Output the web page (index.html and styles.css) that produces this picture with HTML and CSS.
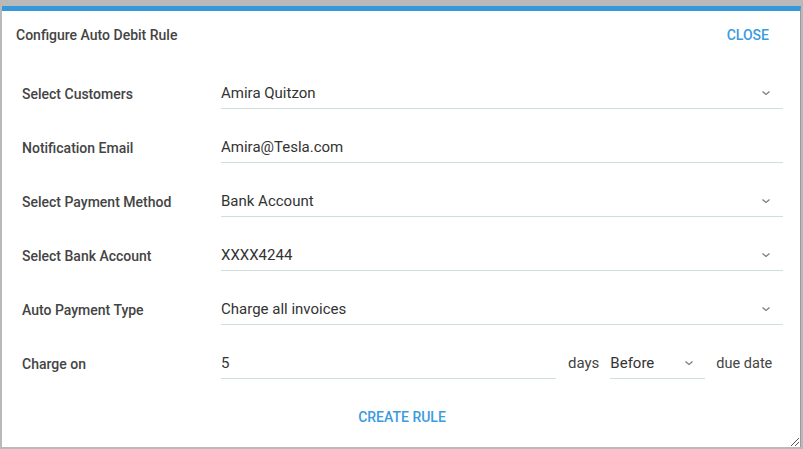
FILE: index.html
```html
<!DOCTYPE html>
<html>
<head>
<meta charset="utf-8">
<link rel="stylesheet" href="styles.css">
</head>
<body>
<div class="dialog">
  <div class="header">
    <div class="title">Configure Auto Debit Rule</div>
    <div class="close">CLOSE</div>
  </div>
  <div class="form">
    <div class="row">
      <div class="label">Select Customers</div>
      <div class="field select"><span>Amira Quitzon</span><svg class="chev" width="10" height="6" viewBox="0 0 10 6"><path d="M1.5 1.5 L5 4.5 L8.5 1.5" fill="none" stroke="#7a7a7a" stroke-width="1.2"/></svg></div>
    </div>
    <div class="row">
      <div class="label">Notification Email</div>
      <div class="field"><span>Amira@Tesla.com</span></div>
    </div>
    <div class="row">
      <div class="label">Select Payment Method</div>
      <div class="field select"><span>Bank Account</span><svg class="chev" width="10" height="6" viewBox="0 0 10 6"><path d="M1.5 1.5 L5 4.5 L8.5 1.5" fill="none" stroke="#7a7a7a" stroke-width="1.2"/></svg></div>
    </div>
    <div class="row">
      <div class="label">Select Bank Account</div>
      <div class="field select"><span>XXXX4244</span><svg class="chev" width="10" height="6" viewBox="0 0 10 6"><path d="M1.5 1.5 L5 4.5 L8.5 1.5" fill="none" stroke="#7a7a7a" stroke-width="1.2"/></svg></div>
    </div>
    <div class="row">
      <div class="label">Auto Payment Type</div>
      <div class="field select"><span>Charge all invoices</span><svg class="chev" width="10" height="6" viewBox="0 0 10 6"><path d="M1.5 1.5 L5 4.5 L8.5 1.5" fill="none" stroke="#7a7a7a" stroke-width="1.2"/></svg></div>
    </div>
    <div class="row">
      <div class="label">Charge on</div>
      <div class="charge">
        <div class="field days-input"><span>5</span></div>
        <div class="text days">days</div>
        <div class="field select when"><span>Before</span><svg class="chev" width="10" height="6" viewBox="0 0 10 6"><path d="M1.5 1.5 L5 4.5 L8.5 1.5" fill="none" stroke="#7a7a7a" stroke-width="1.2"/></svg></div>
        <div class="text due">due date</div>
      </div>
    </div>
  </div>
  <div class="footer">
    <div class="create">CREATE RULE</div>
  </div>
  <svg class="resize" width="10" height="10" viewBox="0 0 10 10"><path d="M9 1 L1 9 M9 5 L5 9" stroke="#555" stroke-width="1"/></svg>
</div>
</body>
</html>
```
FILE: styles.css
```css
* { box-sizing: border-box; }
html, body { margin: 0; padding: 0; }
body {
  background: #b9b9b9;
  width: 803px;
  height: 449px;
  overflow: hidden;
  font-family: Roboto, "Liberation Sans", sans-serif;
  padding: 6px 0 0 2px;
}
.dialog {
  position: relative;
  width: 799px;
  height: 441px;
  background: #fff;
  border-top: 5px solid #3498db;
  border-right: 1px solid #9a9a9a;
  display: flex;
  flex-direction: column;
}
.header {
  height: 48px;
  display: flex;
  align-items: center;
  justify-content: space-between;
  padding: 0 31px 0 14px;
}
.title {
  font-size: 14px;
  font-weight: 500;
  color: #444;
}
.close {
  font-size: 14px;
  font-weight: 500;
  color: #3a9be0;
}
.form {
  padding: 8px 17px 0 20px;
}
.row {
  height: 54px;
  display: flex;
  align-items: center;
}
.label {
  width: 199px;
  font-size: 14px;
  font-weight: 500;
  color: #444;
}
.field {
  flex: 1;
  height: 31px;
  margin-bottom: 1px;
  border-bottom: 1px solid #cfe0dc;
  display: flex;
  align-items: center;
  justify-content: space-between;
  font-size: 15px;
  color: #333;
}
.chev { margin-right: 12px; margin-top: -1px; }
.charge {
  flex: 1;
  display: flex;
  align-items: center;
}
.days-input { flex: none; width: 335px; }
.text {
  font-size: 15px;
  color: #444;
  padding-bottom: 2px;
}
.due { font-size: 14.5px; margin-left: -1px; }
.days { margin: 0 11px 0 12px; }
.when { flex: none; width: 95px; margin-right: 12px; }
.when .chev { margin-right: 11px; }
.footer {
  height: 51px;
  display: flex;
  align-items: center;
  justify-content: center;
}
.create {
  font-size: 14px;
  font-weight: 500;
  color: #3a9be0;
  margin-left: 2px;
}
.resize {
  position: absolute;
  right: 0;
  bottom: 0;
}
```
